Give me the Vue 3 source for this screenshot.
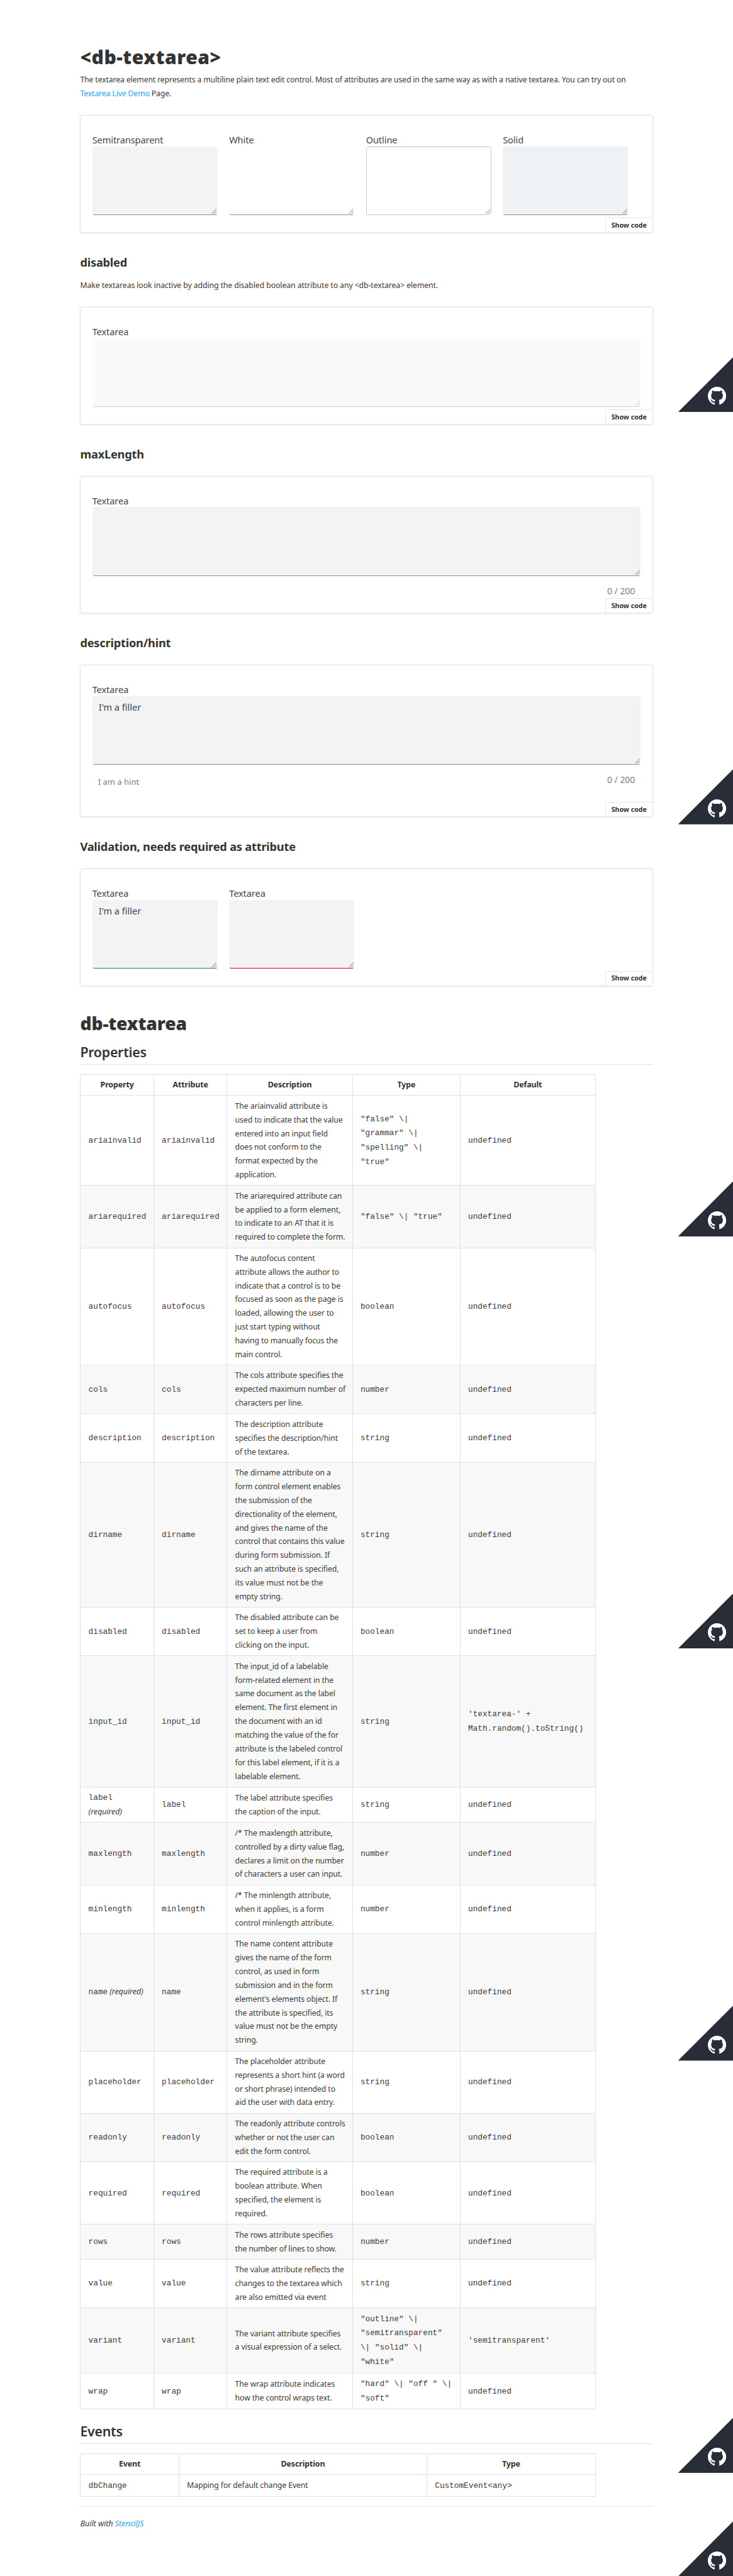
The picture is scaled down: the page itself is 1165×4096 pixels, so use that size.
<script setup>
const variants = [
  { label: 'Semitransparent', kind: 'semi' },
  { label: 'White', kind: 'white' },
  { label: 'Outline', kind: 'outline' },
  { label: 'Solid', kind: 'solid' },
]
const props = [
  ['ariainvalid', 'The ariainvalid attribute is\nused to indicate that the value\nentered into an input field\ndoes not conform to the\nformat expected by the\napplication.', '"false" \\|\n"grammar" \\|\n"spelling" \\|\n"true"'],
  ['ariarequired', 'The ariarequired attribute can\nbe applied to a form element,\nto indicate to an AT that it is\nrequired to complete the form.', '"false" \\| "true"'],
  ['autofocus', 'The autofocus content\nattribute allows the author to\nindicate that a control is to be\nfocused as soon as the page is\nloaded, allowing the user to\njust start typing without\nhaving to manually focus the\nmain control.', 'boolean'],
  ['cols', 'The cols attribute specifies the\nexpected maximum number of\ncharacters per line.', 'number'],
  ['description', 'The description attribute\nspecifies the description/hint\nof the textarea.', 'string'],
  ['dirname', 'The dirname attribute on a\nform control element enables\nthe submission of the\ndirectionality of the element,\nand gives the name of the\ncontrol that contains this value\nduring form submission. If\nsuch an attribute is specified,\nits value must not be the\nempty string.', 'string'],
  ['disabled', 'The disabled attribute can be\nset to keep a user from\nclicking on the input.', 'boolean'],
  ['input_id', 'The input_id of a labelable\nform-related element in the\nsame document as the label\nelement. The first element in\nthe document with an id\nmatching the value of the for\nattribute is the labeled control\nfor this label element, if it is a\nlabelable element.', 'string', "'textarea-' +\nMath.random().toString()"],
  ['label', 'The label attribute specifies\nthe caption of the input.', 'string', 'undefined', '\n'],
  ['maxlength', '/* The maxlength attribute,\ncontrolled by a dirty value flag,\ndeclares a limit on the number\nof characters a user can input.', 'number'],
  ['minlength', '/* The minlength attribute,\nwhen it applies, is a form\ncontrol minlength attribute.', 'number'],
  ['name', "The name content attribute\ngives the name of the form\ncontrol, as used in form\nsubmission and in the form\nelement's elements object. If\nthe attribute is specified, its\nvalue must not be the empty\nstring.", 'string', 'undefined', ' '],
  ['placeholder', 'The placeholder attribute\nrepresents a short hint (a word\nor short phrase) intended to\naid the user with data entry.', 'string'],
  ['readonly', 'The readonly attribute controls\nwhether or not the user can\nedit the form control.', 'boolean'],
  ['required', 'The required attribute is a\nboolean attribute. When\nspecified, the element is\nrequired.', 'boolean'],
  ['rows', 'The rows attribute specifies\nthe number of lines to show.', 'number'],
  ['value', 'The value attribute reflects the\nchanges to the textarea which\nare also emitted via event', 'string'],
  ['variant', 'The variant attribute specifies\na visual expression of a select.', '"outline" \\|\n"semitransparent"\n\\| "solid" \\|\n"white"', "'semitransparent'"],
  ['wrap', 'The wrap attribute indicates\nhow the control wraps text.', '"hard" \\| "off " \\|\n"soft"'],
].map(([name, desc, type, def = 'undefined', gap]) => ({ name, desc, type, def, gap }))
// bottom edges of the repeated repository corner
const corners = [720, 1440, 2160, 2880, 3600, 4320, 4501]
</script>

<template>
  <div class="page">
    <main>
      <h1>&lt;db-textarea&gt;</h1>
      <p class="intro">The textarea element represents a multiline plain text edit control. Most of attributes are used in the same way as with a native textarea. You can try out on<br><a>Textarea Live Demo</a> Page.</p>

      <section class="card">
        <div class="fields">
          <div v-for="v in variants" :key="v.kind" class="field quarter">
            <div class="label">{{ v.label }}</div>
            <div class="area" :class="v.kind"><svg class="grip" viewBox="0 0 9 9"><path d="M.5 8.5l8-8M4.5 8.5l4-4" /></svg></div>
          </div>
        </div>
        <button class="code-btn">Show code</button>
      </section>

      <h4>disabled</h4>
      <p class="note">Make textareas look inactive by adding the disabled boolean attribute to any &lt;db-textarea&gt; element.</p>
      <section class="card">
        <div class="field">
          <div class="label">Textarea</div>
          <div class="area semi off"><svg class="grip" viewBox="0 0 9 9"><path d="M.5 8.5l8-8M4.5 8.5l4-4" /></svg></div>
        </div>
        <button class="code-btn">Show code</button>
      </section>

      <h4>maxLength</h4>
      <section class="card counted">
        <div class="field">
          <div class="label">Textarea</div>
          <div class="area semi"><svg class="grip" viewBox="0 0 9 9"><path d="M.5 8.5l8-8M4.5 8.5l4-4" /></svg></div>
          <div class="foot"><span class="hint"></span><span class="count">0 / 200</span></div>
        </div>
        <button class="code-btn">Show code</button>
      </section>

      <h4>description/hint</h4>
      <section class="card hinted">
        <div class="field">
          <div class="label">Textarea</div>
          <div class="area semi">I'm a filler<svg class="grip" viewBox="0 0 9 9"><path d="M.5 8.5l8-8M4.5 8.5l4-4" /></svg></div>
          <div class="foot"><span class="hint">I am a hint</span><span class="count">0 / 200</span></div>
        </div>
        <button class="code-btn">Show code</button>
      </section>

      <h4>Validation, needs required as attribute</h4>
      <section class="card">
        <div class="fields">
          <div class="field quarter">
            <div class="label">Textarea</div>
            <div class="area semi valid">I'm a filler<svg class="grip" viewBox="0 0 9 9"><path d="M.5 8.5l8-8M4.5 8.5l4-4" /></svg></div>
          </div>
          <div class="field quarter">
            <div class="label">Textarea</div>
            <div class="area semi invalid"><svg class="grip" viewBox="0 0 9 9"><path d="M.5 8.5l8-8M4.5 8.5l4-4" /></svg></div>
          </div>
        </div>
        <button class="code-btn">Show code</button>
      </section>

      <h1 class="api">db-textarea</h1>
      <h2>Properties</h2>
      <table>
        <colgroup><col class="c1"><col class="c1"><col class="c3"><col class="c4"><col class="c5"></colgroup>
        <thead><tr><th>Property</th><th>Attribute</th><th>Description</th><th>Type</th><th>Default</th></tr></thead>
        <tbody>
          <tr v-for="r in props" :key="r.name">
            <td><code>{{ r.name }}</code><template v-if="r.gap">{{ r.gap }}<em>(required)</em></template></td>
            <td><code>{{ r.name }}</code></td>
            <td>{{ r.desc }}</td>
            <td><code>{{ r.type }}</code></td>
            <td><code>{{ r.def }}</code></td>
          </tr>
        </tbody>
      </table>

      <h2 class="events">Events</h2>
      <table>
        <colgroup><col class="e1"><col class="e2"><col class="e3"></colgroup>
        <thead><tr><th>Event</th><th>Description</th><th>Type</th></tr></thead>
        <tbody><tr><td><code>dbChange</code></td><td>Mapping for default change Event</td><td><code>CustomEvent&lt;any&gt;</code></td></tr></tbody>
      </table>
      <hr>
      <div class="built">Built with <a>StencilJS</a></div>
    </main>

    <div v-for="b in corners" :key="b" class="corner" :style="{ top: b - 96 + 'px' }">
      <svg class="mark" viewBox="0 0 16 16"><path d="M8 0C3.58 0 0 3.58 0 8c0 3.54 2.29 6.53 5.47 7.59.4.07.55-.17.55-.38 0-.19-.01-.82-.01-1.49-2.01.37-2.53-.49-2.69-.94-.09-.23-.48-.94-.82-1.13-.28-.15-.68-.52-.01-.53.63-.01 1.08.58 1.23.82.72 1.21 1.87.87 2.33.66.07-.52.28-.87.51-1.07-1.78-.2-3.64-.89-3.64-3.95 0-.87.31-1.59.82-2.15-.08-.2-.36-1.02.08-2.12 0 0 .67-.21 2.2.82.64-.18 1.32-.27 2-.27s1.36.09 2 .27c1.53-1.04 2.2-.82 2.2-.82.44 1.1.16 1.92.08 2.12.51.56.82 1.27.82 2.15 0 3.07-1.87 3.75-3.65 3.95.29.25.54.73.54 1.48 0 1.07-.01 1.93-.01 2.2 0 .21.15.46.55.38A8.01 8.01 0 0 0 16 8c0-4.42-3.58-8-8-8z" /></svg>
    </div>
  </div>
</template>

<style>
body { background: #fff; }
</style>

<style scoped>
.page { position: relative; zoom: 0.91016; width: 1280px; height: 4500.3px; overflow: hidden; background: #fff; color: #3b3b3b; font: 13.5px/24px "Noto Sans", "Open Sans", sans-serif; letter-spacing: -0.12px; }
main { width: 1000px; margin: 0 0 0 140px; padding-top: 80.2px; }
h1, h2, h4, p { margin: 0; }
h1, h2, h4, th { color: #333; white-space: nowrap; }
h1 { font-size: 33px; line-height: 40px; font-weight: 900; letter-spacing: 0.6px; }
h1.api { font-size: 31px; letter-spacing: -0.15px; margin-top: 45.2px; }
h2 { font-size: 23.5px; line-height: 32px; font-weight: 600; letter-spacing: -0.3px; margin: 14px 0 16.4px; padding-bottom: 5.2px; border-bottom: 1px solid #e2e2e2; }
h2.events { margin-top: 21.6px; }
h4 { font-size: 20px; line-height: 24px; font-weight: 700; letter-spacing: -0.22px; margin: 40.7px 0 25.2px; }
p { white-space: nowrap; }
.intro { margin: 7.6px 0 25.4px; letter-spacing: -0.16px; }
.note { margin: -9.6px 0 25.6px; letter-spacing: -0.1px; }
a { color: #1ea7fd; }
.card { position: relative; box-sizing: border-box; height: 205.3px; padding: 31.8px 20px 0; border: 1px solid #e4e4e4; border-radius: 4px; box-shadow: 0 1px 3px rgba(0, 0, 0, 0.1); }
.card.counted { height: 240px; }
.card.hinted { height: 266px; }
.fields { display: flex; gap: 20px; margin-right: -20px; }
.quarter { width: 219px; }
.label { height: 21.6px; font-size: 16px; line-height: 20px; letter-spacing: -0.08px; color: #3f444d; white-space: nowrap; }
.label, .area, .count, .hint { font-weight: 400; }
.area { position: relative; box-sizing: border-box; height: 120px; padding: 7px 10px; border: 1px solid transparent; border-bottom-color: #8a8d93; border-radius: 4px; font-size: 16px; letter-spacing: 0; color: #3f444d; }
.semi { background: #f3f3f3; }
.solid { background: #eef2f5; }
.outline { border-color: #c4c6ca; }
.off { opacity: 0.4; }
.valid { border-bottom-color: #2c7b3c; }
.invalid { border-bottom-color: #e2001a; }
.grip { position: absolute; right: 0.5px; bottom: 0.5px; width: 9px; height: 9px; fill: none; stroke: #555; stroke-width: 0.9; }
.foot { display: flex; justify-content: space-between; padding: 17px 10px 0; line-height: 20px; color: #7a7e87; letter-spacing: 0; }
.hint { font-size: 14.3px; padding-top: 3px; }
.count { font-size: 15.3px; }
.code-btn { position: absolute; right: 0; bottom: 0; width: 82px; height: 25px; padding: 0; border: 1px solid #e4e4e4; border-width: 1px 0 0 1px; border-radius: 4px 0 0; background: #fff; font: 700 11.7px/23px "Noto Sans", sans-serif; color: #333; text-align: center; white-space: nowrap; }
table { border-collapse: collapse; table-layout: fixed; width: 899px; }
.c1 { width: 128px; }
.c3 { width: 219px; }
.c4 { width: 188px; }
.c5 { width: 236px; }
.e1 { width: 172px; }
.e2 { width: 433px; }
.e3 { width: 294px; }
th, td { padding: 5.95px 13.4px; border: 1px solid #e0e0e0; vertical-align: middle; white-space: pre; }
th { font-size: 13.7px; font-weight: 700; text-align: center; letter-spacing: -0.15px; }
tbody tr:nth-child(even) { background: #f8f8f8; }
code { font: 14px/23px "Liberation Mono", monospace; letter-spacing: 0; }
em { font-size: 13.8px; line-height: 23px; font-style: italic; }
hr { height: 1px; margin: 16px 0 18.2px; border: 0; background: #e2e2e2; }
.built { font-size: 14px; font-style: italic; }
.corner { position: absolute; right: 0; width: 96px; height: 96px; background: #282d37; clip-path: polygon(100% 0, 100% 100%, 0 100%); }
.mark { position: absolute; right: 12px; bottom: 12px; width: 32px; height: 32px; fill: #fff; }
</style>
